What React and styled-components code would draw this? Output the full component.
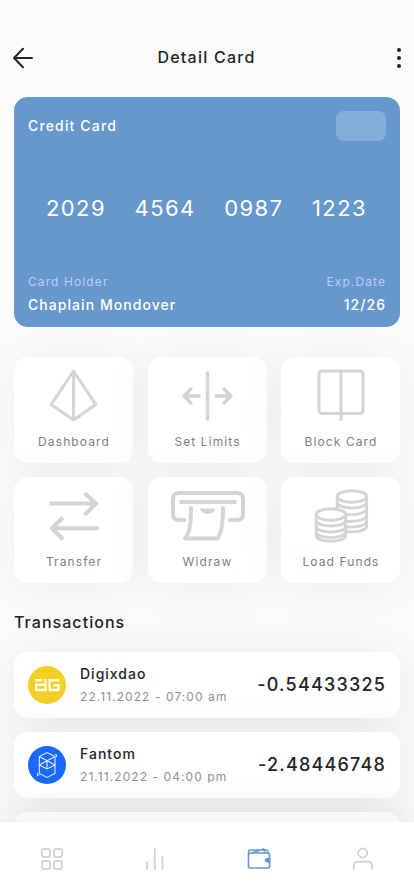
import React from 'react';
import styled, {createGlobalStyle} from "styled-components";

const GlobalStyle = createGlobalStyle`
  * {
    box-sizing: border-box;
  }
  body {
    margin: 0;
    overflow: hidden;
    background: #FBFBFB;
    font-family: Inter, "Liberation Sans", sans-serif;
    color: #232426;
  }
  svg {
    display: block;
    overflow: visible;
    flex: none;
  }
`;

const Screen = styled.div`
  width: 100%;
  height: 896px;
  display: flex;
  flex-direction: column;
  overflow: hidden;
`;

const Content = styled.main`
  flex: 1;
  min-height: 0;
  padding: 0 14px;
`;

const Header = styled.header`
  height: 97px;
  padding-top: 17px;
  margin: 0 -2px 0 -3px;
  display: flex;
  align-items: center;
  justify-content: space-between;
`;

const Title = styled.h1`
  margin: 0;
  font-weight: 500;
  font-size: 16px;
  line-height: 20px;
  letter-spacing: 1.25px;
`;

const IconButton = styled.button`
  width: 24px;
  height: 24px;
  padding: 0;
  border: 0;
  background: none;
  color: inherit;
  display: flex;
  justify-content: ${({$end}) => $end ? "flex-end" : "flex-start"};
`;

const Card = styled.section`
  height: 230px;
  padding: 14px 14px 12px;
  border-radius: 14px;
  background: #6798CD;
  color: #FFFFFF;
  display: flex;
  flex-direction: column;
  justify-content: space-between;
`;

const CardRow = styled.div`
  display: flex;
  justify-content: space-between;
  align-items: center;
`;

const CardName = styled.span`
  font-weight: 450;
  font-size: 14px;
  line-height: 20px;
  letter-spacing: 1.15px;
`;

const Chip = styled.div`
  width: 50px;
  height: 30px;
  border-radius: 8px;
  background: #85ADD8;
`;

const CardNumber = styled.div`
  display: flex;
  justify-content: space-between;
  padding: 2px 19px 0 18px;
  font-size: 22px;
  line-height: 28px;
  letter-spacing: 1.4px;
`;

const CardField = styled.div`
  text-align: ${({$right}) => $right ? "right" : "left"};
`;

const CardLabel = styled.div`
  font-size: 12px;
  line-height: 20px;
  letter-spacing: 1.1px;
  color: #BFCBF7;
`;

const CardValue = styled.div`
  padding-top: 3px;
  font-weight: 450;
  font-size: 14px;
  line-height: 20px;
  letter-spacing: 1.05px;
`;

const Actions = styled.div`
  margin-top: 30px;
  display: grid;
  grid-template-columns: repeat(3, 119px);
  justify-content: space-between;
  row-gap: 14px;
`;

const Action = styled.button`
  height: 106px;
  padding: 12px 0 0;
  border: 0;
  border-radius: 14px;
  background: #FFFFFF;
  box-shadow: 0 4px 50px rgba(0, 0, 0, 0.055);
  font-family: inherit;
  color: #D4D4D4;
  display: flex;
  flex-direction: column;
  align-items: center;
`;

const ActionName = styled.span`
  margin-top: 9px;
  padding-left: 1px;
  font-size: 12px;
  line-height: 20px;
  letter-spacing: 1.1px;
  color: #808080;
`;

const SectionTitle = styled.h2`
  margin: 29px 0 20px;
  font-weight: 500;
  font-size: 16px;
  line-height: 20px;
  letter-spacing: 1.05px;
`;

const List = styled.div`
  display: flex;
  flex-direction: column;
  gap: 14px;
`;

const Transaction = styled.div`
  height: 66px;
  flex: none;
  padding: 0 14px;
  border-radius: 14px;
  background: #FFFFFF;
  box-shadow: 0 4px 50px rgba(0, 0, 0, 0.075);
  display: flex;
  align-items: center;
`;

const Info = styled.div`
  flex: 1;
  margin-left: 14px;
`;

const Name = styled.div`
  font-weight: 500;
  font-size: 14px;
  line-height: 20px;
  letter-spacing: 1px;
`;

const Time = styled.div`
  padding-top: 3px;
  font-size: 12px;
  line-height: 20px;
  letter-spacing: 1.07px;
  color: #909090;
`;

const Amount = styled.div`
  font-weight: 500;
  font-size: 18px;
  line-height: 24px;
  letter-spacing: 1.2px;
`;

const TabBar = styled.nav`
  position: relative;
  height: 74px;
  background: #FFFFFF;
  box-shadow: 0 0 40px rgba(0, 0, 0, 0.08);
  display: flex;
`;

const Tab = styled.a`
  flex: 1;
  display: flex;
  align-items: center;
  justify-content: center;
  color: ${({$active}) => $active ? "#6798CD" : "#D4D4D4"};
`;

const Svg = ({w, h, sw = 3, children}) => (
  <svg
    width={w}
    height={h}
    viewBox={`0 0 ${w} ${h}`}
    fill="none"
    stroke="currentColor"
    strokeWidth={sw}
    strokeLinecap="round"
    strokeLinejoin="round"
  >
    {children}
  </svg>
);

const DashboardIcon = () => (
  <Svg w={54} h={54} sw={3}>
    <path d="M26.5 2L4.2 35.5L26.5 51L48.8 35.5ZM26.5 2V51"/>
  </Svg>
);

const LimitsIcon = () => (
  <Svg w={54} h={54} sw={3.4}>
    <path d="M27.5 4V50M19 27H4.5M11 20L4 27L11 34M36 27H50.5M44 20L51 27L44 34"/>
  </Svg>
);

const BlockIcon = () => (
  <Svg w={54} h={54} sw={3}>
    <rect x="5" y="2" width="44" height="42.5" rx="3"/>
    <path d="M27 2V50.5"/>
  </Svg>
);

const TransferIcon = () => (
  <svg width="54" height="54" viewBox="0 0 54 54" fill="none" stroke="currentColor" strokeWidth="4">
    <path d="M2.500 14.500H49M37.500 4L49 14.500L37.500 26M52 39.300H5M16 28.500L5 39.300L16 50.500"/>
  </svg>
);

const WithdrawIcon = () => (
  <Svg w={74} h={54} sw={4}>
    <path d="M14.500 31H9Q3 31 3 25V10Q3 4 9 4H67Q73 4 73 10V25Q73 31 67 31H59.500"/>
    <path d="M11 13H65M21 19C21 32 20.500 42 15 49.500H47.500Q53 42 53 19"/>
    <path d="M30.500 20H45C43 26 32.500 26 30.500 20Z" fill="currentColor" strokeWidth="1"/>
  </Svg>
);

const FundsIcon = () => (
  <Svg w={54} h={54} sw={2.9}>
    <g transform="translate(-0.8 0)">
      <ellipse cx="38.7" cy="7.5" rx="14.7" ry="5.7"/>
      <path d="M24 7.5V20M53.4 7.5V37.5C53.4 40.5 46 43.5 34.5 42.7M24 13.5C25.5 21 52 21 53.400 13.5M33 25.5C43 26.3 52.5 24 53.4 20M34.5 32.5C44 33 52.5 30.5 53.4 26.5M34.5 38C44 38.5 52.5 36.500 53.4 32.5"/>
      <ellipse cx="17.7" cy="25.5" rx="14.7" ry="5.700"/>
      <path d="M3 25.5V47C4 54 31.5 54 32.4 47V25.5M3 31.5C4 39 31.5 39 32.4 31.5M3 37.5C4 45 31.5 45 32.4 37.5M3 43C4 50.5 31.5 50.5 32.4 43"/>
    </g>
  </Svg>
);

const DigixLogo = () => (
  <svg width="38" height="38" viewBox="0 0 38 38" fill="none" stroke="#FFFBE0" strokeWidth="2.4">
    <circle cx="19" cy="19" r="19" fill="#F4CF27" stroke="none"/>
    <path d="M7 14.3H14.500M17.5 13V24H8.2V18.8H17"/>
    <path d="M31.500 14.3H21.7V24H30.500V19.2H25.500"/>
  </svg>
);

const FantomLogo = () => (
  <svg width="38" height="38" viewBox="0 0 38 38" fill="none" stroke="#E3EEFF" strokeWidth="1.1">
    <circle cx="19" cy="19" r="19" fill="#1969FF" stroke="none"/>
    <path d="M19 6.5L27 10.5V27.5L19 31.500L11.3 27.5V10.500ZM11.3 10.500L27 19L19 23L11.3 19L27 10.500M19 14.500V23M27 8.500L28.500 9V11M11.300 29.500L9.500 29V27"/>
  </svg>
);

const actions = [
  {name: "Dashboard", Icon: DashboardIcon},
  {name: "Set Limits", Icon: LimitsIcon},
  {name: "Block Card", Icon: BlockIcon},
  {name: "Transfer", Icon: TransferIcon},
  {name: "Widraw", Icon: WithdrawIcon},
  {name: "Load Funds", Icon: FundsIcon}
];

const transactions = [
  {name: "Digixdao", time: "22.11.2022 - 07:00 am", amount: "-0.54433325", Logo: DigixLogo},
  {name: "Fantom", time: "21.11.2022 - 04:00 pm", amount: "-2.48446748", Logo: FantomLogo}
];

export default function App() {
  return (
    <Screen>
      <GlobalStyle/>
      <Content>
        <Header>
          <IconButton aria-label="Back">
            <Svg w={24} h={24} sw={2}>
              <path d="M21 13H3M12 3.8L3 13L12 22.200"/>
            </Svg>
          </IconButton>
          <Title>Detail Card</Title>
          <IconButton $end aria-label="More">
            <svg width="6" height="24" fill="currentColor">
              <circle cx="3" cy="5" r="2.1"/>
              <circle cx="3" cy="13" r="2.1"/>
              <circle cx="3" cy="21" r="2.1"/>
            </svg>
          </IconButton>
        </Header>
        <Card>
          <CardRow>
            <CardName>Credit Card</CardName>
            <Chip/>
          </CardRow>
          <CardNumber>
            <span>2029</span>
            <span>4564</span>
            <span>0987</span>
            <span>1223</span>
          </CardNumber>
          <CardRow>
            <CardField>
              <CardLabel>Card Holder</CardLabel>
              <CardValue>Chaplain Mondover</CardValue>
            </CardField>
            <CardField $right>
              <CardLabel>Exp.Date</CardLabel>
              <CardValue>12/26</CardValue>
            </CardField>
          </CardRow>
        </Card>
        <Actions>
          {actions.map(({name, Icon}) => (
            <Action key={name}>
              <Icon/>
              <ActionName>{name}</ActionName>
            </Action>
          ))}
        </Actions>
        <SectionTitle>Transactions</SectionTitle>
        <List>
          {transactions.map(({name, time, amount, Logo}) => (
            <Transaction key={name}>
              <Logo/>
              <Info>
                <Name>{name}</Name>
                <Time>{time}</Time>
              </Info>
              <Amount>{amount}</Amount>
            </Transaction>
          ))}
          <Transaction/>
        </List>
      </Content>
      <TabBar>
        <Tab>
          <Svg w={24} h={24} sw={1.9}>
            <rect x="2" y="2" width="8" height="8" rx="2"/>
            <rect x="14" y="2" width="8" height="8" rx="2"/>
            <rect x="2" y="14" width="8" height="8" rx="2"/>
            <rect x="14" y="14" width="8" height="8" rx="2"/>
          </Svg>
        </Tab>
        <Tab>
          <Svg w={24} h={24} sw={1.9}>
            <path d="M4 15V22M11.8 2V22M19.5 10V22"/>
          </Svg>
        </Tab>
        <Tab $active>
          <Svg w={24} h={24} sw={1.7}>
            <rect x="1.5" y="6" width="21" height="15" rx="1.5"/>
            <path d="M1.5 7V4.5Q1.5 3 3 3H19.5Q21 3 21 6M6 5.5L16.5 2L18 5.5" strokeWidth="1.5"/>
            <path d="M22.5 11.5H20A1.7 1.7 0 0 0 20 15H22.5Z" fill="currentColor" strokeWidth="1"/>
          </Svg>
        </Tab>
        <Tab>
          <Svg w={24} h={24} sw={1.9}>
            <circle cx="12.7" cy="6" r="4.5"/>
            <path d="M3.7 22V19Q3.7 14.7 8 14.7H17.7Q22 14.7 22 19V22"/>
          </Svg>
        </Tab>
      </TabBar>
    </Screen>
  );
};
